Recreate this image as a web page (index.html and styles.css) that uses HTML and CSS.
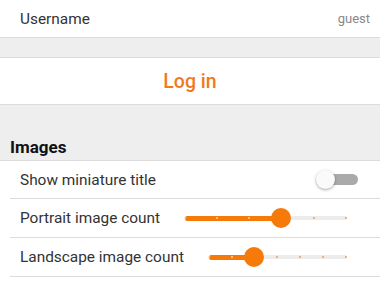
FILE: index.html
```html
<!DOCTYPE html>
<html>
<head>
<meta charset="utf-8">
<link rel="stylesheet" href="styles.css">
</head>
<body>
<div class="screen">
  <div class="row top">
    <span class="label">Username</span>
    <span class="value">guest</span>
  </div>
  <div class="spacer"></div>
  <div class="login">Log in</div>
  <div class="section">Images</div>
  <div class="list">
    <div class="row item">
      <span class="label">Show miniature title</span>
      <span class="toggle"><span class="knob"></span></span>
    </div>
    <div class="row item">
      <span class="label">Portrait image count</span>
      <div class="slider s1">
        <div class="track"></div>
        <div class="fill" style="width:96px"></div>
        <div class="ticks"><i class="on"></i><i class="on"></i><i class="on"></i><i></i><i></i><i></i></div>
        <div class="thumb" style="left:96px"></div>
      </div>
    </div>
    <div class="row item">
      <span class="label">Landscape image count</span>
      <div class="slider s2">
        <div class="track"></div>
        <div class="fill" style="width:45px"></div>
        <div class="ticks"><i class="on"></i><i class="on"></i><i></i><i></i><i></i><i></i><i></i></div>
        <div class="thumb" style="left:45px"></div>
      </div>
    </div>
  </div>
</div>
</body>
</html>
```

FILE: styles.css
```css
* { box-sizing: border-box; }
html, body { margin: 0; padding: 0; background: #fff; }
body { font-family: Roboto, "Noto Sans", sans-serif; color: #333; }
.screen { width: 380px; height: 285px; overflow: hidden; }
.row { display: flex; align-items: center; justify-content: space-between; }
.top { height: 38px; padding: 0 10px 0 20px; border-bottom: 1px solid #dcdcdc; }
.label { font-size: 15.4px; color: #333; }
.value { font-size: 13px; color: #888; }
.spacer { height: 20px; background: #eeeeee; border-bottom: 1px solid #dcdcdc; }
.login { height: 46px; display: flex; align-items: center; justify-content: center; font-size: 19.5px; font-weight: 500; color: #f07a1c; }
.section { height: 57px; background: #eeeeee; border-top: 1px solid #dcdcdc; border-bottom: 1px solid #dcdcdc; display: flex; align-items: flex-end; padding: 0 0 3px 10px; font-size: 17px; font-weight: 700; color: #111; }
.list { margin-left: 10px; }
.item { height: 39px; padding: 0 22px 0 10px; border-bottom: 1px solid #dcdcdc; }
.item:first-child { height: 38px; }
.toggle { position: relative; width: 34px; height: 11px; border-radius: 6px; background: #aaaaaa; }
.knob { position: absolute; left: -8px; top: -4px; width: 19px; height: 19px; border-radius: 50%; background: #fafafa; box-shadow: 0 1px 3px rgba(0,0,0,0.35); }
.slider { position: relative; height: 20px; margin-right: 12px; }
.s1 { width: 161px; }
.s2 { width: 137px; }
.track { position: absolute; left: 0; right: 0; top: 8px; height: 4px; background: #ececec; }
.fill { position: absolute; left: 0; top: 7.5px; height: 5px; background: #f57a0a; border-radius: 2.5px 0 0 2.5px; }
.ticks { position: absolute; left: 0; right: 0; top: 9px; height: 2px; display: flex; justify-content: space-between; }
.ticks i { display: block; width: 2px; height: 2px; border-radius: 1px; background: #ef9a5a; margin-left: -1px; margin-right: -1px; }
.ticks i.on { background: #ffd9b8; }
.thumb { position: absolute; top: 0; width: 20px; height: 20px; margin-left: -10px; border-radius: 50%; background: #f57a0a; }
```
